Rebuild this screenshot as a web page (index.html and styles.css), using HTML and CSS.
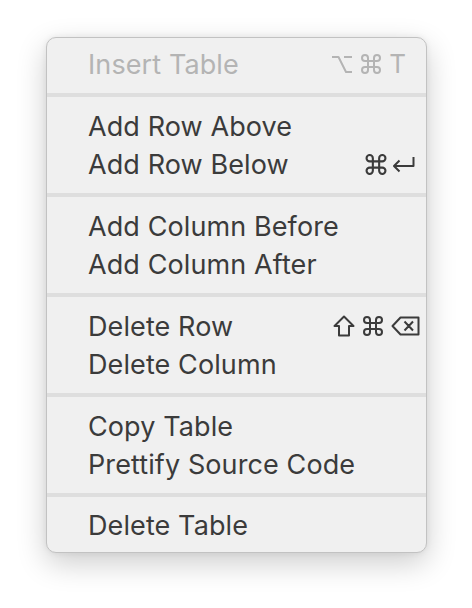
FILE: index.html
```html
<!DOCTYPE html>
<html>
<head>
<meta charset="utf-8">
<link rel="stylesheet" href="styles.css">
</head>
<body>
<div class="menu">
  <div class="section first">
    <div class="item disabled">
      <span class="label">Insert Table</span>
      <span class="keys k-insert">
        <svg class="ico" width="22" height="19" viewBox="0 0 22 19"><path d="M1 2 H7.5 L15 17 H21 M13 2 H21"/></svg>
        <svg class="ico" width="20" height="20" viewBox="0 0 20 20"><path d="M7 13 V4 A3 3 0 1 0 4 7 H16 A3 3 0 1 0 13 4 V16 A3 3 0 1 0 16 13 H4 A3 3 0 1 0 7 16 Z"/></svg>
        <span class="keychar">T</span>
      </span>
    </div>
  </div>
  <div class="sep"></div>
  <div class="section">
    <div class="item"><span class="label">Add Row Above</span></div>
    <div class="item">
      <span class="label">Add Row Below</span>
      <span class="keys k-below">
        <svg class="ico" width="22" height="21" viewBox="0 0 20 20"><path d="M7 13 V4 A3 3 0 1 0 4 7 H16 A3 3 0 1 0 13 4 V16 A3 3 0 1 0 16 13 H4 A3 3 0 1 0 7 16 Z"/></svg>
        <svg class="ico ret" width="25" height="17" viewBox="0 0 25 17"><path d="M22.5 1 V10 H3 M8.5 4.5 L3 10 L8.5 15.5"/></svg>
      </span>
    </div>
  </div>
  <div class="sep"></div>
  <div class="section">
    <div class="item"><span class="label">Add Column Before</span></div>
    <div class="item"><span class="label">Add Column After</span></div>
  </div>
  <div class="sep"></div>
  <div class="section">
    <div class="item">
      <span class="label">Delete Row</span>
      <span class="keys k-delete">
        <svg class="ico" width="22" height="22" viewBox="0 0 22 22"><path d="M11 1.5 L20.5 11 H16 V20.5 H6 V11 H1.5 Z"/></svg>
        <svg class="ico" width="20" height="20" viewBox="0 0 20 20"><path d="M7 13 V4 A3 3 0 1 0 4 7 H16 A3 3 0 1 0 13 4 V16 A3 3 0 1 0 16 13 H4 A3 3 0 1 0 7 16 Z"/></svg>
        <svg class="ico" width="29" height="20" viewBox="0 0 29 20"><path d="M1.5 10 L9.5 1.5 H27.5 V18.5 H9.5 Z M13.5 5.5 L22 14.5 M22 5.5 L13.5 14.5"/></svg>
      </span>
    </div>
    <div class="item"><span class="label">Delete Column</span></div>
  </div>
  <div class="sep"></div>
  <div class="section">
    <div class="item"><span class="label">Copy Table</span></div>
    <div class="item"><span class="label">Prettify Source Code</span></div>
  </div>
  <div class="sep"></div>
  <div class="section last">
    <div class="item"><span class="label">Delete Table</span></div>
  </div>
</div>
</body>
</html>
```

FILE: styles.css
```css
html, body {
  margin: 0;
  padding: 0;
  background: #ffffff;
}

body {
  padding: 37px 0 0 46px;
  min-height: 608px;
  box-sizing: border-box;
  font-family: Inter, "Liberation Sans", sans-serif;
}

.menu {
  box-sizing: border-box;
  width: 381px;
  background: #f0f0f0;
  border: 1px solid #c2c2c2;
  border-radius: 10px;
  box-shadow: 0 10px 30px rgba(0, 0, 0, 0.2), 0 0 6px rgba(0, 0, 0, 0.07);
  color: #3b3b3b;
  font-size: 27px;
  letter-spacing: 0.1px;
  overflow: hidden;
}

.section {
  padding: 10px 0 10px 0;
}

.section.first {
  padding: 7px 0 10px 0;
}

.section.last {
  padding: 9px 0 8px 0;
}

.sep {
  height: 4px;
  background: #dedede;
}

.item {
  display: flex;
  align-items: center;
  justify-content: space-between;
  height: 38px;
  padding-left: 41px;
}

.label {
  white-space: nowrap;
}

.disabled {
  color: #b4b4b4;
}

.keys {
  display: flex;
  align-items: center;
  gap: 8px;
}

.ico {
  display: block;
  fill: none;
  stroke: currentColor;
  stroke-width: 2;
  stroke-linejoin: round;
}

.keychar {
  font-size: 26px;
  line-height: 1;
  letter-spacing: 0;
}

.k-insert {
  margin-right: 20px;
}

.k-below {
  margin-right: 10px;
  gap: 4px;
}

.k-delete {
  margin-right: 6px;
  gap: 8px;
}
```
